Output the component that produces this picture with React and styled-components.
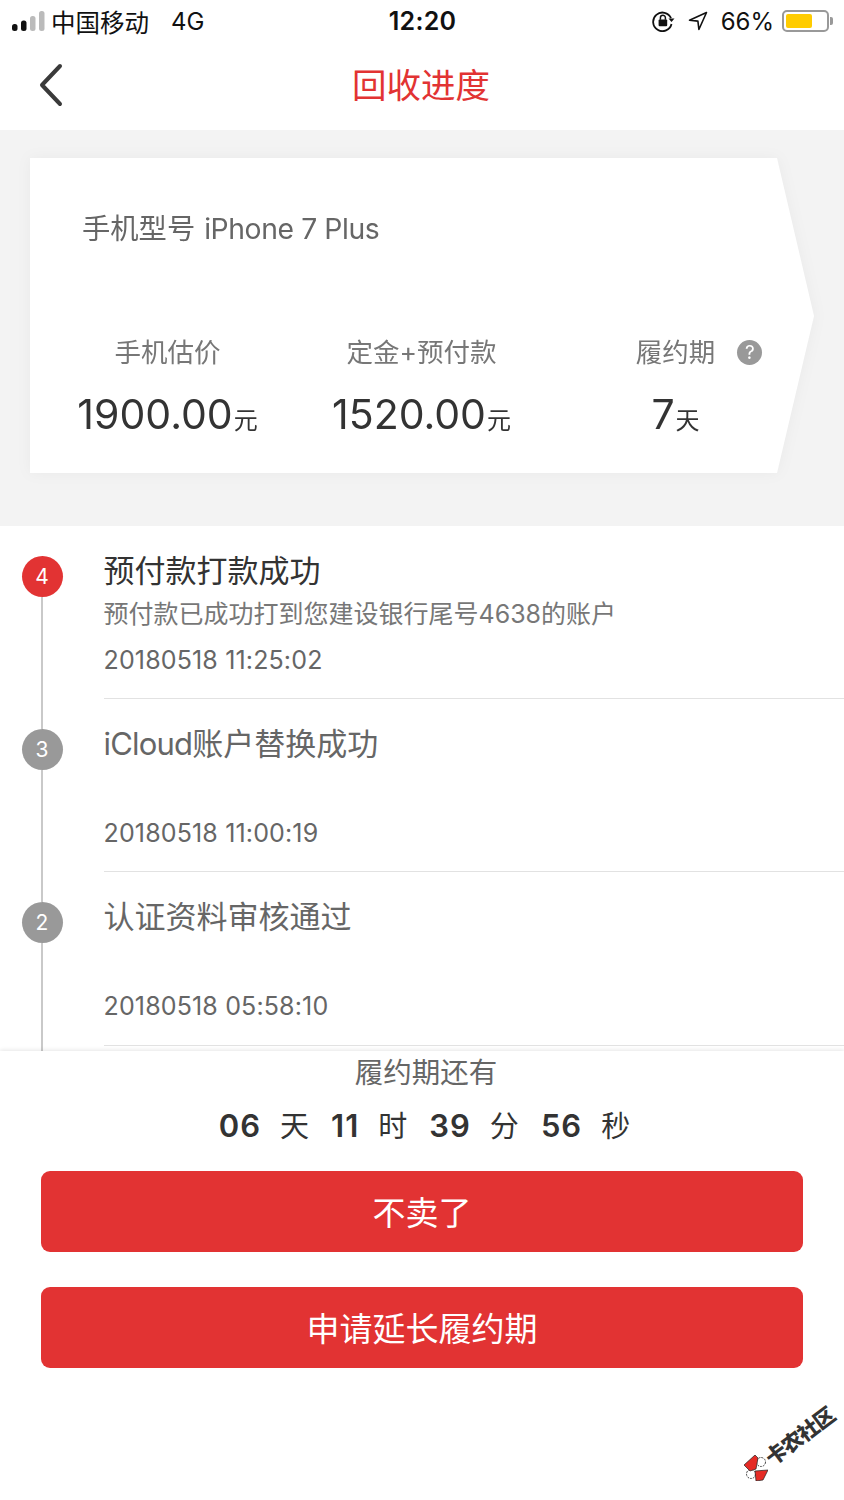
import React from "react";
import styled, { createGlobalStyle } from "styled-components";

const Global = createGlobalStyle`
  html, body { margin: 0; padding: 0; background: #fff; }
  * { box-sizing: border-box; }
  body { font-family: Inter, "Noto Sans CJK SC", sans-serif; }
`;
const Page = styled.div`
  width: 844px; height: 1500px; position: relative; overflow: hidden; background: #fff;
  display: flex; flex-direction: column;
`;
const StatusBar = styled.div`
  height: 42px; display: grid; grid-template-columns: 1fr auto 1fr; align-items: center;
  padding: 0 15px 0 12px; color: #111; font-size: 24.5px;
`;
const StatusLeft = styled.div`display: flex; align-items: center;`;
const Carrier = styled.span`margin-left: 6px; font-size: 24.5px;`;
const Network = styled.span`margin-left: 22px; font-size: 24px;`;
const Clock = styled.div`font-size: 25px; font-weight: 600; letter-spacing: 0.3px; margin-left: 4px;`;
const StatusRight = styled.div`display: flex; align-items: center; justify-content: flex-end;`;
const Percent = styled.span`margin: 0 8px 0 13px; font-size: 24px;`;
const Battery = styled.div`
  width: 47px; height: 22px; border: 2px solid #999; border-radius: 5px; padding: 2px; position: relative;
  &::after { content: ""; position: absolute; right: -6px; top: 5px; width: 3px; height: 8px; background: #999; border-radius: 0 2px 2px 0; }
`;
const BatteryFill = styled.div`height: 100%; background: #fc0; border-radius: 2px;`;
const Nav = styled.div`height: 88px; position: relative; display: flex; align-items: center; justify-content: center;`;
const BackIcon = styled.svg`position: absolute; left: 38px; top: 21px;`;
const NavTitle = styled.h1`margin: 0 2px 0 0; color: #e23333; font-size: 34.5px; font-weight: 400; line-height: 1;`;
const Summary = styled.section`
  height: 396px; background: #f3f3f3; padding: 28px 0 0 30px;
`;
const CardShadow = styled.div`width: 784px; height: 315px; filter: drop-shadow(0 0 7px rgba(0,0,0,.04));`;
const Card = styled.div`
  width: 100%; height: 100%; background: #fff; padding: 52px 0 0 0;
  clip-path: polygon(0 0, 747px 0, 784px 158px, 747px 315px, 0 315px);
`;
const Model = styled.div`margin-left: 52px; color: #666; font-size: 28.3px; line-height: 38px;`;
const Latin = styled.span`letter-spacing: ${p => p.$track}px; margin-left: ${p => p.$lead || 0}px;`;
const Stats = styled.div`display: grid; grid-template-columns: 275px 233px 275px; margin: 85px 0 0 0;`;
const Stat = styled.div`display: flex; flex-direction: column; align-items: center;`;
const StatLabel = styled.div`
  color: #777; font-size: 26.5px; line-height: 38px; position: relative;
`;
const Help = styled.span`
  position: absolute; left: calc(100% + 22px); top: 7px;
  width: 25px; height: 25px; border-radius: 50%; background: #999; color: #fff; font-size: 19px; line-height: 25px;
  display: flex; align-items: center; justify-content: center;
`;
const ValueRow = styled.div`margin-top: 18px; color: #333; font-size: 41px; line-height: 50px; white-space: nowrap;`;
const Unit = styled.span`font-size: 24px; margin-left: 1px;`;
const List = styled.section`height: 525px; overflow: hidden;`;
const Row = styled.div`display: grid; grid-template-columns: 103.5px 1fr; height: 173.2px;`;
const Rail = styled.div`display: flex; flex-direction: column; align-items: center; width: 84px; height: 100%;`;
const RailLine = styled.div`
  width: 1.5px; background: ${p => (p.$hidden ? "transparent" : "#c9c9c9")};
  ${p => (p.$grow ? "flex: 1;" : "height: 30px;")}
`;
const RailTail = styled.div`width: 1.5px; height: 8px; margin-left: 41.25px; background: #c9c9c9;`;
const Dot = styled.div`
  width: 41px; height: 41px; flex: none; border-radius: 50%; color: #fff; font-size: 21px;
  background: ${p => (p.$active ? "#e23333" : "#999")};
  display: flex; align-items: center; justify-content: center;
`;
const Body = styled.div`
  border-bottom: 1.5px solid #e2e2e2; padding-top: 25px; position: relative;
`;
const Title = styled.div`
  color: ${p => (p.$active ? "#333" : "#666")}; font-size: 31px; line-height: 40px;
`;
const Sub = styled.div`color: #777; font-size: 25px; line-height: 34px; height: 34px; margin-top: 6px;`;
const Stamp = styled.div`color: #666; font-size: 25px; line-height: 34px; margin-top: 12px; letter-spacing: .15px;`;
const Footer = styled.section`
  position: relative; flex: 1; background: #fff; box-shadow: 0 -1px 4px rgba(0,0,0,.1);
  display: flex; flex-direction: column; align-items: center; padding: 3px 41px 0;
`;
const FooterLabel = styled.div`color: #666; font-size: 28.5px; line-height: 38px; margin-left: 8px;`;
const Countdown = styled.div`
  display: flex; align-items: baseline; gap: 19px; margin-top: 14px; margin-left: 8px;
  color: #333; font-size: 31px; line-height: 40px; font-weight: 600;
`;
const CountValue = styled.span`letter-spacing: 1px;`;
const CountUnit = styled.span`font-weight: 400; font-size: 29px; margin-right: 3px;`;
const Action = styled.button`
  width: 100%; height: 81px; border: 0; border-radius: 9px; background: #e23333; color: #fff;
  font: inherit; font-size: 33px; flex: none;
  margin-top: ${p => p.$top}px; padding: 0 0 2px;
`;
const WatermarkLogo = styled.svg`position: absolute; left: 744px; top: 1455px;`;
const WatermarkText = styled.span`
  position: absolute; left: 760px; top: 1426px; width: 80px; text-align: center;
  color: #333; font-size: 21px; font-weight: 900; line-height: 1; letter-spacing: -1px; white-space: nowrap;
  transform: rotate(-37deg);
`;

const steps = [
  { n: 4, title: "预付款打款成功", sub: "预付款已成功打到您建设银行尾号4638的账户", time: "20180518 11:25:02", active: true },
  { n: 3, latin: "iCloud", title: "账户替换成功", time: "20180518 11:00:19" },
  { n: 2, title: "认证资料审核通过", time: "20180518 05:58:10" },
];
const stats = [
  { label: "手机估价", value: "1900.00", unit: "元" },
  { label: "定金+预付款", value: "1520.00", unit: "元" },
  { label: "履约期", value: "7", unit: "天", help: true },
];
const counts = [["06", "天"], ["11", "时"], ["39", "分"], ["56", "秒"]];

const Signal = () => (
  <svg width="33" height="22" viewBox="0 0 33 22">
    <rect x="0" y="14" width="5.5" height="7" rx="2.5" fill="#111" />
    <rect x="9" y="10.5" width="5.5" height="10.5" rx="2.5" fill="#111" />
    <rect x="18" y="6" width="5.5" height="15" rx="2.5" fill="#bbb" />
    <rect x="27" y="1" width="5.5" height="20" rx="2.5" fill="#bbb" />
  </svg>
);
const RotationLock = () => (
  <svg width="24" height="22" viewBox="0 0 24 22">
    <path d="M19 8.2A9.3 9.3 0 1 0 19.5 14" fill="none" stroke="#111" strokeWidth="1.8" />
    <path d="M16.5 8.5h6l-3 3.4z" fill="#111" />
    <rect x="6.6" y="9.5" width="8.6" height="6.8" rx="1" fill="#111" />
    <path d="M8.4 9.7V7.8a2.5 2.5 0 0 1 5 0v1.9" fill="none" stroke="#111" strokeWidth="1.5" />
  </svg>
);
const LocationArrow = () => (
  <svg width="20" height="20" viewBox="0 0 20 20" style={{ marginLeft: 12 }}>
    <path d="M18.5 1.5 1.5 9.2l8.4.9 1 8.4z" fill="none" stroke="#111" strokeWidth="1.6" strokeLinejoin="round" />
  </svg>
);

export default function App() {
  return (
    <Page>
      <Global />
      <StatusBar>
        <StatusLeft><Signal /><Carrier>中国移动</Carrier><Network>4G</Network></StatusLeft>
        <Clock>12:20</Clock>
        <StatusRight>
          <RotationLock /><LocationArrow /><Percent>66%</Percent>
          <Battery><BatteryFill style={{ width: "66%" }} /></Battery>
        </StatusRight>
      </StatusBar>
      <Nav>
        <BackIcon width="26" height="44" viewBox="0 0 26 44">
          <path d="M22 3 4 22l18 19" fill="none" stroke="#3a3a3a" strokeWidth="4" strokeLinecap="round" strokeLinejoin="round" />
        </BackIcon>
        <NavTitle>回收进度</NavTitle>
      </Nav>
      <Summary>
        <CardShadow>
          <Card>
            <Model>手机型号 <Latin $track={-0.4} $lead={1}>iPhone 7 Plus</Latin></Model>
            <Stats>
              {stats.map(s => (
                <Stat key={s.label}>
                  <StatLabel>{s.label}{s.help && <Help>?</Help>}</StatLabel>
                  <ValueRow>{s.value}<Unit>{s.unit}</Unit></ValueRow>
                </Stat>
              ))}
            </Stats>
          </Card>
        </CardShadow>
      </Summary>
      <List>
        {steps.map((s, i) => (
          <Row key={s.n}>
            <Rail>
              <RailLine $hidden={i === 0} />
              <Dot $active={s.active}>{s.n}</Dot>
              <RailLine $grow />
            </Rail>
            <Body>
              <Title $active={s.active}>{s.latin && <Latin $track={-0.8}>{s.latin}</Latin>}{s.title}</Title>
              <Sub>{s.sub}</Sub>
              <Stamp>{s.time}</Stamp>
            </Body>
          </Row>
        ))}
        <RailTail />
      </List>
      <Footer>
        <FooterLabel>履约期还有</FooterLabel>
        <Countdown>
          {counts.map(([v, u]) => (
            <React.Fragment key={u}><CountValue>{v}</CountValue><CountUnit>{u}</CountUnit></React.Fragment>
          ))}
        </Countdown>
        <Action $top={24}>不卖了</Action>
        <Action $top={35}>申请延长履约期</Action>
      </Footer>
      <WatermarkLogo width="24" height="26" viewBox="0 0 24 26">
        <circle cx="17" cy="7" r="4.5" fill="#fff" stroke="#333" strokeWidth=".9" strokeDasharray="2 1" />
        <circle cx="7" cy="19" r="4.5" fill="#fff" stroke="#333" strokeWidth=".9" strokeDasharray="2 1" />
        <path d="M0 10 11 0l3 3-2 11-6 2zM11 16l13-1-5 10-7 1z" fill="#e52b25" stroke="#222" strokeWidth=".7" />
      </WatermarkLogo>
      <WatermarkText>卡农社区</WatermarkText>
    </Page>
  );
}
